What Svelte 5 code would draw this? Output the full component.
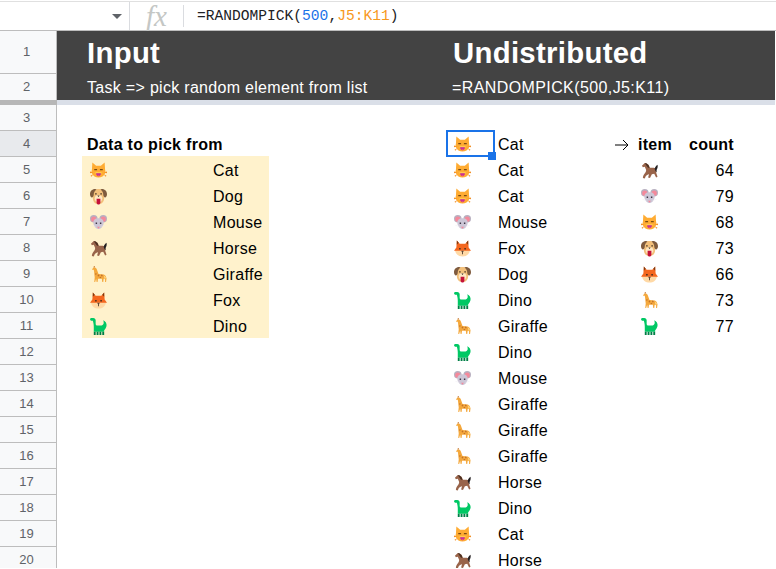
<script>
  const left = [
    ['cat', 'Cat'], ['dog', 'Dog'], ['mouse', 'Mouse'], ['horse', 'Horse'],
    ['giraffe', 'Giraffe'], ['fox', 'Fox'], ['dino', 'Dino']
  ];
  const picks = [
    ['cat', 'Cat'], ['cat', 'Cat'], ['cat', 'Cat'], ['mouse', 'Mouse'], ['fox', 'Fox'], ['dog', 'Dog'],
    ['dino', 'Dino'], ['giraffe', 'Giraffe'], ['dino', 'Dino'], ['mouse', 'Mouse'], ['giraffe', 'Giraffe'],
    ['giraffe', 'Giraffe'], ['giraffe', 'Giraffe'], ['horse', 'Horse'], ['dino', 'Dino'], ['cat', 'Cat'], ['horse', 'Horse']
  ];
  const counts = [
    ['horse', 64], ['mouse', 79], ['cat', 68], ['dog', 73], ['fox', 66], ['giraffe', 73], ['dino', 77]
  ];
  // sheet rows 4..20
  const rows = picks.map((p, i) => {
    const n = i + 4;
    return {
      n,
      pick: p,
      data: n >= 5 && n <= 11 ? left[n - 5] : null,
      count: n >= 5 && n <= 11 ? counts[n - 5] : null
    };
  });
</script>

{#snippet icon(name)}
  <svg class="emoji" viewBox="0 0 36 36" aria-hidden="true">
    {#if name === 'cat'}
      <path fill="#FFAC33" d="M5 1l8 7h10l8-7 1 16c1 3 1 5 0 7-2 6-8 9-14 9S6 30 4 24c-1-2-1-4 0-7z"/>
      <path fill="#F18F26" d="M0 20l7 2-7 2zm36 0l-7 2 7 2zM1 29l6-3-4 5zm34 0l-6-3 4 5z"/>
      <path fill="#7A4A12" d="M9 15h6v2.500H9zm12 0h6v2.500h-6z"/>
      <path fill="#FFCC4D" d="M12 21h12l1 3-7 2-7-2z"/>
      <path fill="#C2259E" d="M13 24h10c0 4-2 6-5 6s-5-2-5-6z"/>
      <path fill="#E8596E" d="M15 27h6c-1 2-2 3-3 3s-2-1-3-3z"/>
    {:else if name === 'dog'}
      <path fill="#F3C07B" d="M6 12C6 5 12 2 18 2s12 3 12 10v9c0 8-5 13-12 13S6 29 6 21z"/>
      <path fill="#7F5B3E" d="M11 2C4 2 0 7 0 13c0 4 2 7 4 7s4-3 4-7 2-7 6-10zm14 0c7 0 11 5 11 11 0 4-2 7-4 7s-4-3-4-7-2-7-6-10z"/>
      <path fill="#FFE8C4" d="M10 22c0-5 4-7 8-7s8 2 8 7-4 8-8 8-8-3-8-8z"/>
      <path fill="#3B2A1E" d="M11 11h3v3h-3zm11 0h3v3h-3zm-6.500 5h5l-2.500 3z"/>
      <path fill="#C4113A" d="M14 23h8v7c0 3-2 5-4 5s-4-2-4-5z"/>
    {:else if name === 'mouse'}
      <circle cx="8" cy="10" r="8" fill="#B8B0C0"/>
      <circle cx="28" cy="10" r="8" fill="#B8B0C0"/>
      <circle cx="8" cy="11" r="5.500" fill="#F4899B"/>
      <circle cx="28" cy="11" r="5.500" fill="#F4899B"/>
      <path fill="#CCC6D6" d="M7 18c0-6 5-9 11-9s11 3 11 9c0 7-6 14-11 14S7 25 7 18z"/>
      <path fill="#3B3544" d="M12 18h3v3h-3zm9 0h3v3h-3z"/>
      <path fill="#F4899B" d="M15 27h6l-3 4z"/>
      <path stroke="#EDE9F2" stroke-width="1" d="M3 24l9 2M33 24l-9 2"/>
    {:else if name === 'horse'}
      <path fill="#99644A" d="M2 8l6-6 4 1 4 3 3 6h8c5 1 6 5 5 10l3 9-3 2-4-8-5 1-4 8-4-1 2-7c-3 1-5 2-7 4l-2 5-4-1c0-4 2-8 5-11 1-2 2-4 2-6L8 10l-4 1z"/>
      <path fill="#4A2F20" d="M8 2l4 1 4 4 2 5h-3C13 9 10 6 8 2z"/>
      <path fill="#231F20" d="M29 14c1-3 3-6 6-8 1 4 0 8-2 11v5c-2-2-4-5-4-8z"/>
    {:else if name === 'giraffe'}
      <path fill="#F4A83C" d="M7 3h4l3 3 4 11 11 1c3 1 5 4 6 8l-1 8h-2v-6l-3-1-1 7h-2l-1-7H17l-1 7h-2l-1-7-2 7H9l1-10C9 17 9 12 8 8L4 8z"/>
      <path fill="#C1702A" d="M8 0h2v3H8zm9 18l3 1-1 3-3-1zm7 0l3 1-1 3-3-1zm-3 5l3 1-1 2-3-1zm-9-8l2 1-1 3-2-1z"/>
      <path fill="#FFD983" d="M29 19l5 6-3 3z"/>
    {:else if name === 'fox'}
      <path fill="#FFD9A6" d="M2 21h32c-1 9-8 14-16 14S3 30 2 21z"/>
      <path fill="#F4671F" d="M6 1l6 7h12l6-7 1 15 5 7H0l5-7z"/>
      <path fill="#7A3A12" d="M6 1l4 5-4 4zm24 0l-4 5 4 4z"/>
      <path fill="#3B2A1E" d="M11 17h3v3h-3zm11 0h3v3h-3z"/>
      <path fill="#5B4636" d="M15 23h6l-2 3v4h-2v-4z"/>
    {:else if name === 'dino'}
      <path fill="#00C864" d="M0 3c0-2 2-3 4-3h3c3 0 5 2 5 5v7c0 3 2 4 4 4h6c4 0 6-2 7-5 0-2 0-4-1-6 5 2 8 7 7 12-1 4-3 7-5 9v3H8V18c0-4-1-9-2-12H2z"/>
      <path fill="#007F46" d="M8 29h4v7H8zm6 0h4v7h-4zm6 0h4v7h-4zm6 0h4v7h-4z"/>
    {/if}
  </svg>
{/snippet}

<div class="app">
  <header class="formula">
    <span class="caret"></span>
    <span class="divider first"></span>
    <span class="fx">fx</span>
    <span class="divider"></span>
    <code class="expr">=RANDOMPICK(<span class="num">500</span>,<span class="range">J5:K11</span>)</code>
  </header>

  <section class="sheet">
    <div class="frozen">
      <div class="row tall">
        <div class="head">1</div>
        <div class="band"><h1>Input</h1><h1>Undistributed</h1></div>
      </div>
      <div class="row sub">
        <div class="head noline">2</div>
        <div class="band"><p>Task =&gt; pick random element from list</p><p class="second">=RANDOMPICK(500,J5:K11)</p></div>
      </div>
      <div class="bar"><i></i><b></b></div>
    </div>

    <div class="grid">
      <div class="head">3</div>
      <div class="blank"></div>

      {#each rows as r}
        <div class="head" class:selected={r.n === 4}>{r.n}</div>
        <div class="cells">
          <span class="c-a"></span>
          {#if r.data}
            <span class="c-b fill pic">{@render icon(r.data[0])}</span>
            <span class="c-c fill">{r.data[1]}</span>
          {:else}
            <span class="c-b" class:strong={r.n === 4}>{r.n === 4 ? 'Data to pick from' : ''}</span>
            <span class="c-c"></span>
          {/if}
          <span class="c-d"></span>
          <span class="c-e" class:active={r.n === 4}>
            {@render icon(r.pick[0])}
            {#if r.n === 4}<i class="handle"></i>{/if}
          </span>
          <span class="c-f">{r.pick[1]}</span>
          {#if r.n === 4}
            <span class="c-g">
              <svg class="arrow" viewBox="0 0 14 12" aria-hidden="true"><path d="M0 6h13M8 1l5 5-5 5" fill="none" stroke="#000" stroke-width="1"/></svg>
            </span>
            <span class="c-h strong">item</span>
            <span class="c-i strong">count</span>
          {:else if r.count}
            <span class="c-g"></span>
            <span class="c-h pic">{@render icon(r.count[0])}</span>
            <span class="c-i">{r.count[1]}</span>
          {/if}
        </div>
      {/each}
    </div>
  </section>
</div>

<style>
  :global(body) {
    margin: 0;
    background: #fff;
    font-family: "Liberation Sans", Arial, sans-serif;
  }
  .app {
    width: 776px;
    height: 569px;
    overflow: hidden;
    background: #fff;
  }
  .formula {
    box-sizing: border-box;
    height: 30px;
    margin-top: 1px;
    display: flex;
    align-items: center;
    border-top: 1px solid #e0e0e0;
    border-bottom: 1px solid #bdbdbd;
    padding-left: 112px;
  }
  .caret {
    width: 0;
    height: 0;
    border-left: 5px solid transparent;
    border-right: 5px solid transparent;
    border-top: 5px solid #5f6368;
    margin-top: 1px;
  }
  .divider {
    width: 1px;
    height: 22px;
    background: #dadce0;
    margin-left: 17px;
  }
  .divider.first {
    height: 28px;
    margin-left: 7px;
  }
  .fx {
    font-family: "Liberation Serif", serif;
    font-style: italic;
    font-size: 29px;
    color: #c4c7c5;
    margin-left: 16px;
    width: 20px;
    line-height: 1;
  }
  .expr {
    font-family: "Liberation Mono", monospace;
    font-size: 14.6px;
    color: #202124;
    margin-left: 13px;
  }
  .num { color: #1a73e8; }
  .range { color: #f7981d; }

  .sheet {
    width: 775px;
    height: 537px;
    overflow: hidden;
  }
  .row {
    display: grid;
    grid-template-columns: 57px 1fr;
  }
  .tall { height: 43px; }
  .sub { height: 26px; }
  .head {
    box-sizing: border-box;
    height: 26px;
    background: #f8f9fa;
    border-right: 1px solid #bdbdbd;
    border-bottom: 1px solid #bdbdbd;
    color: #5f6368;
    font-size: 13px;
    line-height: 25px;
    text-align: center;
    padding-right: 3px;
  }
  .tall .head {
    height: 43px;
    line-height: 41px;
  }
  .head.noline { border-bottom: 0; }
  .head.selected { background: #e8eaed; }
  .band {
    background: #434343;
    color: #fff;
    display: grid;
    grid-template-columns: 366px 1fr;
    padding-left: 30px;
    letter-spacing: 0.3px;
  }
  h1 {
    margin: 0;
    font-size: 29.33px;
    font-weight: 700;
    line-height: 44px;
  }
  p {
    margin: 0;
    font-size: 16px;
    line-height: 28px;
  }
  .second {
    margin-left: -1px;
    letter-spacing: 0.4px;
  }
  .bar {
    display: grid;
    grid-template-columns: 57px 1fr;
    height: 5px;
  }
  .bar i { background: #b7b7b7; }
  .bar b { background: #dadfe8; }

  .grid {
    display: grid;
    grid-template-columns: 57px 1fr;
    grid-auto-rows: 26px;
  }
  .cells {
    display: grid;
    grid-template-columns: 25px 126px 61px 178px 47px 112px 28px 44px 59px;
    height: 26px;
    margin-top: -1px;
    font-size: 16px;
    line-height: 30px;
    letter-spacing: 0.3px;
    color: #000;
    white-space: nowrap;
  }
  .cells > span {
    display: block;
    height: 26px;
    position: relative;
  }
  .c-b { padding-left: 5px; }
  .c-b.pic { padding-left: 8px; }
  .c-c { padding-left: 5px; }
  .c-f { padding-left: 4px; }
  .c-g { padding-left: 9px; }
  .c-h { padding-left: 4px; }
  .c-h.pic { padding-left: 7px; }
  .c-i {
    text-align: right;
    padding-right: 3px;
  }
  .c-e { padding-left: 7px; }
  .fill { background: #fff2cc; }
  .strong { font-weight: 700; }
  .emoji {
    display: block;
    width: 17px;
    height: 17px;
    margin-top: 6px;
  }
  .arrow {
    display: block;
    width: 14px;
    height: 12px;
    margin-top: 9px;
  }
  .active::after {
    content: "";
    position: absolute;
    inset: 0 -1px -1px -1px;
    border: 2px solid #1a73e8;
  }
  .handle {
    position: absolute;
    z-index: 1;
    right: -2px;
    bottom: -4px;
    width: 8px;
    height: 8px;
    background: #1a73e8;
  }
</style>
